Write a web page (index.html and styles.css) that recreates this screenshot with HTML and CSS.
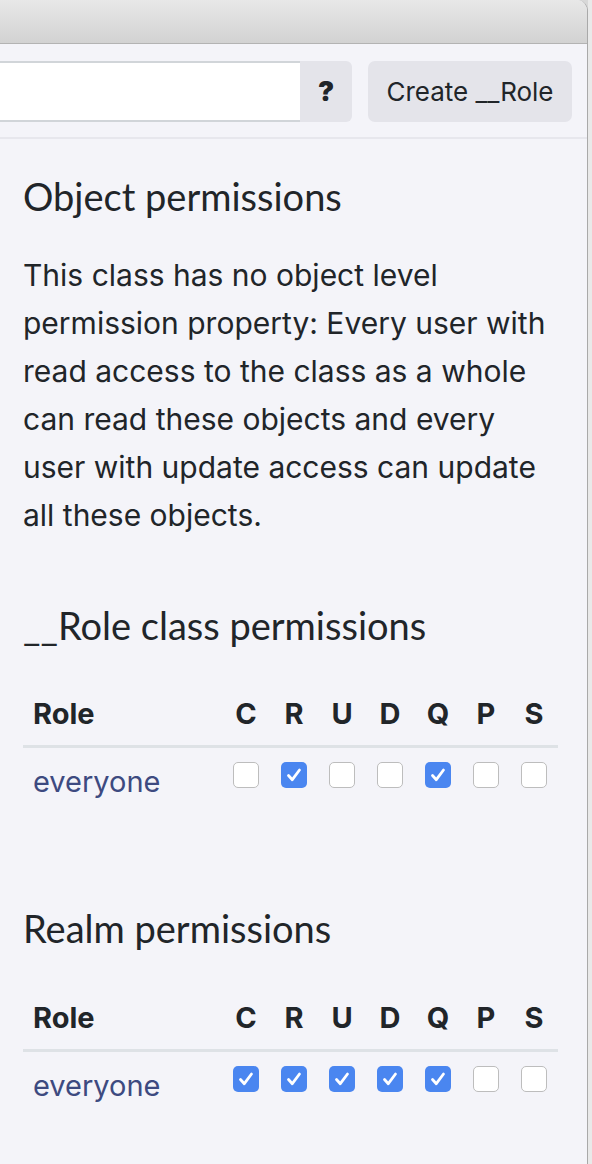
FILE: index.html
```html
<!DOCTYPE html>
<html>
<head>
<meta charset="utf-8">
<link rel="stylesheet" href="styles.css">
</head>
<body>
<div class="screen">
  <div class="window">
    <div class="titlebar"></div>
    <div class="toolbar">
      <div class="input-group">
        <div class="input"></div>
        <div class="addon">?</div>
      </div>
      <button class="btn">Create __Role</button>
    </div>
    <div class="content">
      <h2 class="heading first">Object permissions</h2>
      <p class="desc">This class has no object level permission property: Every user with read access to the class as a whole can read these objects and every user with update access can update all these objects.</p>

      <h2 class="heading">__Role class permissions</h2>
      <table class="perm">
        <thead>
          <tr><th class="role">Role</th><th>C</th><th>R</th><th>U</th><th>D</th><th>Q</th><th>P</th><th>S</th></tr>
        </thead>
        <tbody>
          <tr>
            <td class="role name">everyone</td>
            <td><span class="cb"></span></td>
            <td><span class="cb on"><svg viewBox="0 0 26 26"><path d="M7.5 13.5l3.8 4.2L18.5 8"/></svg></span></td>
            <td><span class="cb"></span></td>
            <td><span class="cb"></span></td>
            <td><span class="cb on"><svg viewBox="0 0 26 26"><path d="M7.5 13.5l3.8 4.2L18.5 8"/></svg></span></td>
            <td><span class="cb"></span></td>
            <td><span class="cb"></span></td>
          </tr>
        </tbody>
      </table>

      <h2 class="heading realm">Realm permissions</h2>
      <table class="perm">
        <thead>
          <tr><th class="role">Role</th><th>C</th><th>R</th><th>U</th><th>D</th><th>Q</th><th>P</th><th>S</th></tr>
        </thead>
        <tbody>
          <tr>
            <td class="role name">everyone</td>
            <td><span class="cb on"><svg viewBox="0 0 26 26"><path d="M7.5 13.5l3.8 4.2L18.5 8"/></svg></span></td>
            <td><span class="cb on"><svg viewBox="0 0 26 26"><path d="M7.5 13.5l3.8 4.2L18.5 8"/></svg></span></td>
            <td><span class="cb on"><svg viewBox="0 0 26 26"><path d="M7.5 13.5l3.8 4.2L18.5 8"/></svg></span></td>
            <td><span class="cb on"><svg viewBox="0 0 26 26"><path d="M7.5 13.5l3.8 4.2L18.5 8"/></svg></span></td>
            <td><span class="cb on"><svg viewBox="0 0 26 26"><path d="M7.5 13.5l3.8 4.2L18.5 8"/></svg></span></td>
            <td><span class="cb"></span></td>
            <td><span class="cb"></span></td>
          </tr>
        </tbody>
      </table>
    </div>
  </div>
  <div class="outside"></div>
</div>
</body>
</html>
```

FILE: styles.css
```css
html, body {
  margin: 0;
  padding: 0;
}
body {
  width: 592px;
  height: 1164px;
  overflow: hidden;
  background: #d8d8d8;
  font-family: Inter, "Liberation Sans", sans-serif;
  color: #212529;
}
.screen {
  display: flex;
  height: 1164px;
}
.window {
  width: 587px;
  flex: none;
  background: #f4f4f9;
  border-right: 1px solid #a9a9a9;
  border-top-right-radius: 11px;
  overflow: hidden;
}
.outside {
  flex: 1;
  background: #e9e9e9;
}
.titlebar {
  height: 43px;
  background: linear-gradient(#e8e8e8, #d2d2d2);
  border-bottom: 1px solid #b3b3b3;
}
.toolbar {
  display: flex;
  align-items: stretch;
  gap: 16px;
  padding: 17px 14px 15px 0;
  border-bottom: 2px solid #e7e7ed;
}
.input-group {
  display: flex;
  width: 352px;
  height: 61px;
}
.input {
  flex: 1;
  background: #fff;
  border-top: 2px solid #d1d5d9;
  border-bottom: 2px solid #d1d5d9;
}
.addon {
  width: 52px;
  background: #e4e4ea;
  border-radius: 0 6px 6px 0;
  display: flex;
  align-items: center;
  justify-content: center;
  font-weight: 900;
  font-size: 27px;
  color: #212529;
}
.btn {
  width: 204px;
  height: 61px;
  border: none;
  background: #e4e4ea;
  border-radius: 7px;
  font-family: Inter, "Liberation Sans", sans-serif;
  font-size: 26px;
  color: #212529;
  padding: 0;
}
.content {
  padding: 0 29px 0 23px;
}
.heading {
  font-family: Lato, "Open Sans", sans-serif;
  font-weight: 400;
  font-size: 38px;
  line-height: 38px;
  margin: 67px 0 38px;
  color: #212529;
}
.heading.first {
  margin-top: 38px;
  margin-bottom: 36px;
}
.heading.realm {
  margin-top: 96px;
  margin-bottom: 39px;
}
.desc {
  font-size: 30px;
  line-height: 48px;
  margin: 0;
}
.perm {
  width: 535px;
  border-collapse: collapse;
  font-size: 29px;
}
.perm th {
  font-weight: 700;
  width: 48px;
  padding: 12px 0;
  line-height: 39px;
  text-align: center;
  border-bottom: 3px solid #dee2e6;
}
.perm th.role, .perm td.role {
  width: auto;
  text-align: left;
  padding-left: 10px;
}
.perm td {
  padding: 14px 0 12px;
  line-height: 39px;
  text-align: center;
  vertical-align: top;
}
.perm td.name {
  color: #3d4a80;
}
.cb {
  display: inline-block;
  box-sizing: border-box;
  width: 26px;
  height: 26px;
  margin-top: 0;
  border: 1px solid #bdbdbd;
  border-radius: 5px;
  background: #fff;
  vertical-align: top;
}
.cb.on {
  border: none;
  background: #4a86f0;
}
.cb svg {
  display: block;
  width: 26px;
  height: 26px;
}
.cb path {
  fill: none;
  stroke: #fff;
  stroke-width: 2.8;
  stroke-linecap: round;
  stroke-linejoin: round;
}
```
